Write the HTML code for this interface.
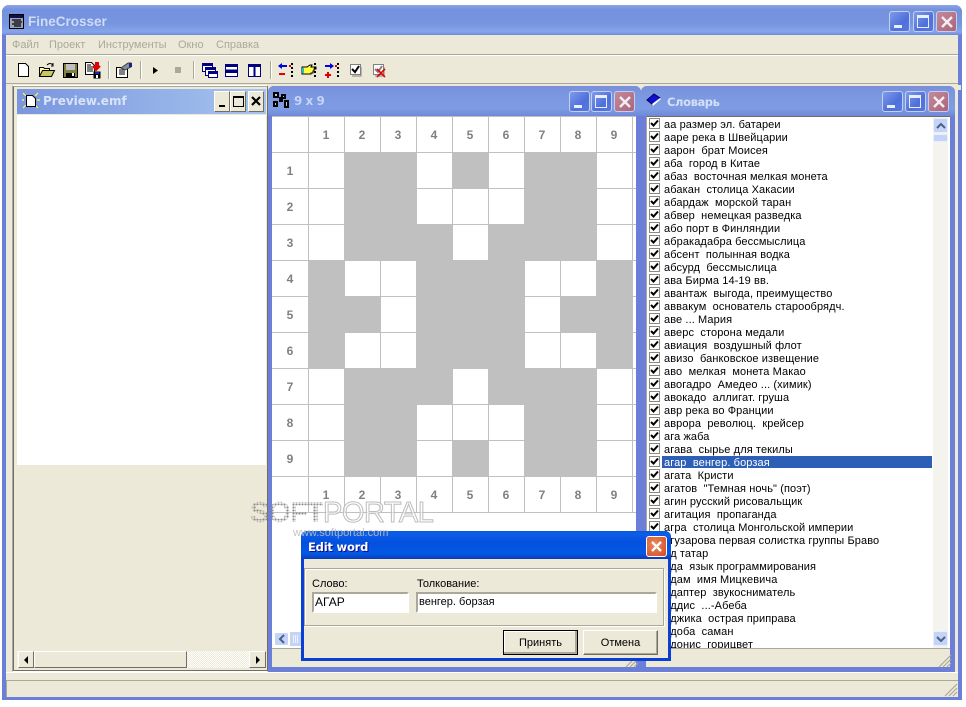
<!DOCTYPE html>
<html><head><meta charset="utf-8"><style>
html,body{margin:0;padding:0;background:#fff;width:966px;height:707px;overflow:hidden}
body{position:relative;font-family:"Liberation Sans",sans-serif;font-size:11px;color:#000}
.a{position:absolute}
.t{position:absolute;white-space:pre;line-height:13px}
.cap{position:absolute;background:linear-gradient(180deg,#7a8fdc 0,#7b97e0 30%,#7e9ce3 75%,#6f88d8 100%)}
.tt{position:absolute;white-space:pre;font-weight:bold;color:#d8e3f8;font-size:13px}
.b{position:absolute;width:19px;height:19px;border:1px solid #c3cff0;border-radius:3px;background:linear-gradient(135deg,#7f9be8,#4f70dc 60%,#5878e0);box-sizing:content-box}
.b.x{background:linear-gradient(135deg,#c28a9c,#ad6479)}
.b i{position:absolute;display:block}
.n i{left:4px;top:13px;width:8px;height:3px;background:#e8eefc}
.m i{left:3px;top:3px;width:10px;height:9px;border:1.5px solid #e8eefc;border-top-width:3px}
.x svg{position:absolute;left:3px;top:3px}
.l{left:664px;letter-spacing:.1px}
.cb{position:absolute;width:75px;height:25px;background:#ece9d8;box-sizing:border-box;border:1px solid;border-color:#fff #716f64 #716f64 #fff;box-shadow:inset -1px -1px 0 #aca899;text-align:center;line-height:24px;font-size:12px}
.in{position:absolute;background:#fff;box-sizing:border-box;border:2px solid;border-color:#aca899 #fff #fff #aca899;height:21px;font-size:12px;line-height:17px;padding-left:1px;white-space:pre}
.cl{position:absolute;background:#ece9d8;border:1px solid;border-color:#fff #716f64 #716f64 #fff;box-sizing:border-box}
</style></head><body>

<!-- main window -->
<div class="a" style="left:2px;top:5px;width:960px;height:695px;background:#6b7fd8;border-radius:7px 7px 0 0"></div>
<div class="cap" style="left:2px;top:5px;width:960px;height:30px;border-radius:7px 7px 0 0;background:linear-gradient(180deg,#8fa6e8 0,#7491dd 15%,#7694e0 60%,#86a5ea 90%,#6f88d8 100%)"></div>
<svg class="a" style="left:9px;top:14px" width="16" height="16" viewBox="0 0 16 16"><rect x=".5" y=".5" width="14" height="14" fill="#9aa3b8" stroke="#000"/><rect x="1" y="1" width="13" height="3" fill="#101050"/><path d="M3 6h9M5 8h8M3 10h9M5 12h7" stroke="#000" stroke-width="1.2"/></svg>
<div class="tt" style="left:28px;top:14px;font-size:13.500px;color:#d0dcf6">FineCrosser</div>
<div class="b n" style="left:889px;top:11px"><i></i></div>
<div class="b m" style="left:913px;top:11px"><i></i></div>
<div class="b x" style="left:936px;top:11px"><svg width="14" height="14" viewBox="0 0 14 14"><path d="M2 2l10 10M12 2L2 12" stroke="#f4eef0" stroke-width="2.4"/></svg></div>

<!-- client -->
<div class="a" style="left:6px;top:35px;width:952px;height:662px;background:#ece9d8"></div>
<div class="a" style="left:6px;top:54px;width:952px;height:1px;background:#aca899"></div>
<div class="a" style="left:6px;top:55px;width:952px;height:1px;background:#fff"></div>
<div class="a" style="left:6px;top:83px;width:952px;height:1px;background:#aca899"></div>

<!-- menu -->
<div class="t" style="left:12px;top:39px;color:#aca899">Файл</div>
<div class="t" style="left:49px;top:39px;color:#aca899">Проект</div>
<div class="t" style="left:98px;top:39px;color:#aca899">Инструменты</div>
<div class="t" style="left:178px;top:39px;color:#aca899">Окно</div>
<div class="t" style="left:216px;top:39px;color:#aca899">Справка</div>

<!-- toolbar -->
<svg class="a" style="left:0;top:56px" width="400" height="28" viewBox="0 56 400 28">
<path d="M18.5 63.5h7l3 3v10h-10z" fill="#fff" stroke="#000"/>
<path d="M39.5 76.5v-9h4l1 1h5v2" fill="#ffffa0" stroke="#000"/><path d="M39.5 76.5l3-6h12l-3 6z" fill="#c8c860" stroke="#000"/><path d="M47 65q3-3 6 0m0-2v3h-2" fill="none" stroke="#000"/>
<rect x="63.5" y="63.5" width="14" height="14" fill="#808040" stroke="#000"/><rect x="66" y="64" width="9" height="6" fill="#c0c0c0"/><rect x="66" y="73" width="9" height="4" fill="#000"/><rect x="72" y="73" width="2" height="3" fill="#fff"/>
<path d="M85.5 62.5h6l3 3v9h-9z" fill="#fff" stroke="#000"/><path d="M87 65h4M87 67h6M87 69h6M87 71h6" stroke="#000"/>
<path d="M96 62v5M93 66l3 4 4-4M98 62v5" stroke="#e00000" stroke-width="2" fill="#e00000"/>
<rect x="93.5" y="71.5" width="7" height="7" fill="#000"/><rect x="95" y="72" width="4" height="2" fill="#2020d0"/><rect x="96" y="75" width="2" height="3" fill="#fff"/>
<path d="M116.5 67.5h11v10h-11z" fill="#fff" stroke="#000"/><path d="M119 70h6M119 72h6M119 74h6" stroke="#000"/><path d="M121 68l7-5 3 0 0 4-6 3z" fill="#8090a0" stroke="#404040"/><rect x="129" y="63" width="3" height="4" fill="#202080"/>
<path d="M153 67l5 3.500-5 3.500z" fill="#000"/>
<rect x="175" y="67" width="6" height="6" fill="#aca899"/>
<g fill="#fff" stroke="#000080"><rect x="202.500" y="63.500" width="10" height="8"/><rect x="205.500" y="67.500" width="10" height="8"/><rect x="208.500" y="71.500" width="9" height="6"/></g>
<path d="M203 65h9M206 69h9M209 73h8" stroke="#000080" stroke-width="2"/>
<rect x="225.500" y="64.500" width="12" height="12" fill="#fff" stroke="#000080"/><path d="M225 66h13M225 70.500h13M225 72h13" stroke="#000080" stroke-width="2"/>
<rect x="248.500" y="64.500" width="12" height="12" fill="#fff" stroke="#000080"/><path d="M248 66h13M254.500 65v12" stroke="#000080" stroke-width="2"/>
<path d="M279 66h8" stroke="#0000e0" stroke-width="2"/><path d="M282 63v6l-4-3z" fill="#0000e0"/><path d="M279 74h6" stroke="#e00000" stroke-width="2"/><path d="M292 63v16" stroke="#000" stroke-width="2" stroke-dasharray="2 2"/><rect x="289" y="65" width="2" height="2" fill="#e00000"/>
<path d="M302 67h5l3-2h2l-1 2h5v2h-2v2h-1v2h-2v1h-9z" fill="#ffff40" stroke="#000"/><rect x="302" y="68" width="2" height="5" fill="#20c0c0"/><path d="M315 63v16" stroke="#000" stroke-width="2" stroke-dasharray="2 2"/>
<path d="M325 66h7" stroke="#0000e0" stroke-width="2"/><path d="M330 63v6l4-3z" fill="#0000e0"/><path d="M325 75h6M328 72v6" stroke="#e00000" stroke-width="2"/><path d="M338 63v16" stroke="#000" stroke-width="2" stroke-dasharray="2 2"/><rect x="335" y="65" width="2" height="2" fill="#e00000"/>
<rect x="350.500" y="64.500" width="10" height="10" fill="#fff" stroke="#808080"/><path d="M361 67v9h-9" fill="none" stroke="#808080"/><path d="M352 69l3 3 4-6" fill="none" stroke="#000" stroke-width="2"/>
<rect x="373.500" y="64.500" width="10" height="10" fill="#fff" stroke="#808080"/><path d="M384 67v9h-9" fill="none" stroke="#808080"/><path d="M375 69l3 3 4-6" fill="none" stroke="#808080" stroke-width="2"/><path d="M377 69l8 8M385 69l-8 8" stroke="#e00000" stroke-width="1.600"/>
<g fill="#aca899"><rect x="108" y="61" width="1" height="18"/><rect x="140" y="61" width="1" height="18"/><rect x="193" y="61" width="1" height="18"/><rect x="270" y="61" width="1" height="18"/></g>
<g fill="#fff"><rect x="109" y="61" width="1" height="18"/><rect x="141" y="61" width="1" height="18"/><rect x="194" y="61" width="1" height="18"/><rect x="271" y="61" width="1" height="18"/></g>
</svg>

<!-- Preview child -->
<div class="a" style="left:12px;top:85px;width:256px;height:587px;box-sizing:border-box;border:1px solid;border-color:#fff #aca899 #fff #aca899"></div>
<div class="a" style="left:13px;top:86px;width:255px;height:585px;box-sizing:border-box;border:1px solid;border-color:#aca899 #716f64 #716f64 #716f64"></div>
<div class="a" style="left:17px;top:89px;width:249px;height:25px;background:linear-gradient(90deg,#7a96df,#a6c4ee)"></div>
<svg class="a" style="left:22px;top:92px" width="18" height="18" viewBox="0 0 18 18"><path d="M1 1l3 3M16 1l-3 3M1 16l3-3M16 16l-3-3M0 8h2M15 8h3" stroke="#ffff40" stroke-width="1.200"/><path d="M4.500 3.500h6l3 3v8h-9z" fill="#fff" stroke="#000"/></svg>
<div class="tt" style="left:43px;top:94px;font-family:'DejaVu Sans',sans-serif;font-size:12px;color:#d8e3f8">Preview.emf</div>
<div class="cl" style="left:214px;top:91px;width:16px;height:21px"><div class="a" style="left:4px;top:13px;width:6px;height:2px;background:#000"></div></div>
<div class="cl" style="left:230px;top:91px;width:16px;height:21px"><div class="a" style="left:2px;top:4px;width:9px;height:8px;border:1px solid #000;border-top-width:2px"></div></div>
<div class="cl" style="left:248px;top:91px;width:16px;height:21px"><svg class="a" style="left:2px;top:4px" width="10" height="10"><path d="M1 1l8 8M9 1l-8 8" stroke="#000" stroke-width="2.200"/></svg></div>
<div class="a" style="left:17px;top:115px;width:249px;height:350px;background:#fff"></div>
<!-- Preview hscroll -->
<div class="a" style="left:17px;top:651px;width:249px;height:17px;background:repeating-conic-gradient(#ece9d8 0 25%,#fff 0 50%) 0 0/2px 2px"></div>
<div class="cl" style="left:18px;top:651px;width:16px;height:17px"><svg class="a" style="left:3px;top:3px" width="8" height="10"><path d="M6 1v8L2 5z" fill="#000"/></svg></div>
<div class="cl" style="left:34px;top:651px;width:153px;height:17px"></div>
<div class="cl" style="left:249px;top:651px;width:17px;height:17px"><svg class="a" style="left:5px;top:3px" width="8" height="10"><path d="M1 1v8l4-4z" fill="#000"/></svg></div>

<!-- 9x9 child -->
<div class="a" style="left:268px;top:86px;width:373px;height:586px;background:#6b7fd8;border-radius:6px 6px 0 0"></div>
<div class="cap" style="left:268px;top:86px;width:373px;height:30px;border-radius:6px 6px 0 0"></div>
<svg class="a" style="left:273px;top:92px" width="17" height="17" viewBox="0 0 17 17"><g fill="#000"><rect x="0" y="0" width="6" height="6"/><rect x="8" y="2" width="5" height="5"/><rect x="0" y="9" width="5" height="6"/><rect x="11" y="8" width="5" height="8"/><rect x="6" y="5" width="4" height="5"/></g><g fill="#c0c0d0"><rect x="2" y="2" width="2" height="2"/><rect x="10" y="4" width="1" height="1"/><rect x="2" y="11" width="1" height="2"/><rect x="13" y="10" width="1" height="4"/></g></svg>
<div class="tt" style="left:294px;top:94px;font-family:'DejaVu Sans',sans-serif;font-size:12px;color:#c6d4f4;letter-spacing:-.5px">9 x 9</div>
<div class="b n" style="left:569px;top:91px"><i></i></div>
<div class="b m" style="left:591px;top:91px"><i></i></div>
<div class="b x" style="left:614px;top:91px"><svg width="14" height="14" viewBox="0 0 14 14"><path d="M2 2l10 10M12 2L2 12" stroke="#f4eef0" stroke-width="2.400"/></svg></div>
<div class="a" style="left:272px;top:116px;width:364px;height:532px;background:#fff"></div>
<div class="a" style="left:272px;top:648px;width:364px;height:19px;background:#ece9d8;border-top:1px solid #aca899;box-sizing:border-box"></div>

<svg class="a" style="left:0;top:0" width="966" height="707" viewBox="0 0 966 707">
<g fill="#c0c0c0">
<rect x="345" y="153" width="72" height="72"/><rect x="453" y="153" width="36" height="36"/><rect x="525" y="153" width="72" height="72"/>
<rect x="345" y="225" width="108" height="36"/><rect x="489" y="225" width="108" height="36"/>
<rect x="309" y="261" width="36" height="108"/><rect x="417" y="261" width="108" height="108"/><rect x="597" y="261" width="36" height="108"/>
<rect x="345" y="297" width="36" height="36"/><rect x="561" y="297" width="36" height="36"/>
<rect x="345" y="369" width="108" height="36"/><rect x="489" y="369" width="108" height="36"/>
<rect x="345" y="405" width="72" height="72"/><rect x="525" y="405" width="72" height="72"/><rect x="453" y="441" width="36" height="36"/>
</g>
<g stroke="#c0c0c0" stroke-width="1" fill="none" shape-rendering="crispEdges">
<path d="M308.500 116v397M344.500 116v397M380.500 116v397M416.500 116v397M452.500 116v397M488.500 116v397M524.500 116v397M560.500 116v397M596.500 116v397M632.500 116v397"/>
<path d="M272 116.500h364M272 152.500h364M272 188.500h364M272 224.500h364M272 260.500h364M272 296.500h364M272 332.500h364M272 368.500h364M272 404.500h364M272 440.500h364M272 476.500h364M272 512.500h364"/>
</g>
<g font-family="Liberation Sans" font-weight="bold" font-size="12" fill="#808080" text-anchor="middle">
<text x="326" y="139">1</text><text x="362" y="139">2</text><text x="398" y="139">3</text><text x="434" y="139">4</text><text x="470" y="139">5</text><text x="506" y="139">6</text><text x="542" y="139">7</text><text x="578" y="139">8</text><text x="614" y="139">9</text>
<text x="326" y="499">1</text><text x="362" y="499">2</text><text x="398" y="499">3</text><text x="434" y="499">4</text><text x="470" y="499">5</text><text x="506" y="499">6</text><text x="542" y="499">7</text><text x="578" y="499">8</text><text x="614" y="499">9</text>
<text x="290" y="175">1</text><text x="290" y="211">2</text><text x="290" y="247">3</text><text x="290" y="283">4</text><text x="290" y="319">5</text><text x="290" y="355">6</text><text x="290" y="391">7</text><text x="290" y="427">8</text><text x="290" y="463">9</text>
</g>
</svg>

<!-- 9x9 hscroll -->
<div class="a" style="left:274px;top:632px;width:15px;height:14px;background:#c4d4f8;border:1px solid #fff;border-radius:2px;box-sizing:border-box"><svg class="a" style="left:3px;top:1px" width="8" height="10"><path d="M6 1L2 5l4 4" fill="none" stroke="#4d6185" stroke-width="2"/></svg></div>
<div class="a" style="left:290px;top:632px;width:14px;height:14px;background:#c4d4f8"><svg class="a" style="left:2px;top:3px" width="8" height="8"><path d="M1.500 0v8M3.500 0v8M5.500 0v8" stroke="#eef3ff"/></svg></div>

<!-- Dict child -->
<div class="a" style="left:641px;top:85px;width:320px;height:5px;background:#ece9d8"></div>
<div class="a" style="left:641px;top:86px;width:314px;height:586px;background:#6b7fd8;border-radius:6px 6px 0 0"></div>
<div class="cap" style="left:641px;top:86px;width:314px;height:30px;border-radius:6px 6px 0 0"></div>
<svg class="a" style="left:646px;top:93px" width="18" height="16" viewBox="0 0 18 16"><path d="M1 7l7-6 6 4-7 7z" fill="#1010d0" stroke="#000060"/><path d="M6 11l8-6 1 1-8 7z" fill="#fff"/></svg>
<div class="tt" style="left:667px;top:95px;font-family:'DejaVu Sans',sans-serif;font-size:11.500px;color:#d5e0f7;letter-spacing:-.4px">Словарь</div>
<div class="b n" style="left:882px;top:91px"><i></i></div>
<div class="b m" style="left:905px;top:91px"><i></i></div>
<div class="b x" style="left:928px;top:91px"><svg width="14" height="14" viewBox="0 0 14 14"><path d="M2 2l10 10M12 2L2 12" stroke="#f4eef0" stroke-width="2.400"/></svg></div>
<div class="a" style="left:646px;top:116px;width:304px;height:551px;background:#ece9d8"></div>
<div class="a" style="left:646px;top:116px;width:304px;height:532px;background:#fff;box-sizing:border-box;border-top:1px solid #716f64;border-left:1px solid #aca899;overflow:hidden"></div>
<div class="a" style="left:646px;top:648px;width:304px;height:1px;background:#aca899"></div>
<div class="a" style="left:933px;top:117px;width:15px;height:531px;background:#f4f3ee"></div>
<div class="a" style="left:933px;top:118px;width:15px;height:15px;background:#c4d4f8;border:1px solid #e8eefc;border-radius:2px;box-sizing:border-box"><svg class="a" style="left:2px;top:3px" width="10" height="8"><path d="M1 6l4-4 4 4" fill="none" stroke="#4d6185" stroke-width="2"/></svg></div>
<div class="a" style="left:933px;top:134px;width:15px;height:8px;background:#c4d4f8;border:1px solid #e8eefc;border-radius:2px;box-sizing:border-box"></div>
<div class="a" style="left:933px;top:631px;width:15px;height:15px;background:#c4d4f8;border:1px solid #e8eefc;border-radius:2px;box-sizing:border-box"><svg class="a" style="left:2px;top:3px" width="10" height="8"><path d="M1 2l4 4 4-4" fill="none" stroke="#4d6185" stroke-width="2"/></svg></div>
<svg class="a" style="left:938px;top:654px" width="14" height="14"><path d="M13 1L1 13M13 5L5 13M13 9L9 13" stroke="#aca899" stroke-width="1.200"/></svg>

<!-- List -->
<div class="a" style="left:662px;top:456px;width:270px;height:12px;background:#2e5fb6"></div>
<div class="t l" style="top:119px">аа размер эл. батареи</div>
<div class="t l" style="top:132px">ааре река в Швейцарии</div>
<div class="t l" style="top:145px">аарон  брат Моисея</div>
<div class="t l" style="top:158px">аба  город в Китае</div>
<div class="t l" style="top:171px">абаз  восточная мелкая монета</div>
<div class="t l" style="top:184px">абакан  столица Хакасии</div>
<div class="t l" style="top:197px">абардаж  морской таран</div>
<div class="t l" style="top:210px">абвер  немецкая разведка</div>
<div class="t l" style="top:223px">або порт в Финляндии</div>
<div class="t l" style="top:236px">абракадабра бессмыслица</div>
<div class="t l" style="top:249px">абсент  полынная водка</div>
<div class="t l" style="top:262px">абсурд  бессмыслица</div>
<div class="t l" style="top:275px">ава Бирма 14-19 вв.</div>
<div class="t l" style="top:288px">авантаж  выгода, преимущество</div>
<div class="t l" style="top:301px">аввакум  основатель старообрядч.</div>
<div class="t l" style="top:314px">аве ... Мария</div>
<div class="t l" style="top:327px">аверс  сторона медали</div>
<div class="t l" style="top:340px">авиация  воздушный флот</div>
<div class="t l" style="top:353px">авизо  банковское извещение</div>
<div class="t l" style="top:366px">аво  мелкая  монета Макао</div>
<div class="t l" style="top:379px">авогадро  Амедео ... (химик)</div>
<div class="t l" style="top:392px">авокадо  аллигат. груша</div>
<div class="t l" style="top:405px">авр река во Франции</div>
<div class="t l" style="top:418px">аврора  революц.  крейсер</div>
<div class="t l" style="top:431px">ага жаба</div>
<div class="t l" style="top:444px">агава  сырье для текилы</div>
<div class="t l" style="top:457px;color:#fff">агар  венгер. борзая</div>
<div class="t l" style="top:470px">агата  Кристи</div>
<div class="t l" style="top:483px">агатов  "Темная ночь" (поэт)</div>
<div class="t l" style="top:496px">агин русский рисовальщик</div>
<div class="t l" style="top:509px">агитация  пропаганда</div>
<div class="t l" style="top:522px">агра  столица Монгольской империи</div>
<div class="t l" style="top:535px">агузарова первая солистка группы Браво</div>
<div class="t l" style="top:548px">ад татар</div>
<div class="t l" style="top:561px">ада  язык программирования</div>
<div class="t l" style="top:574px">адам  имя Мицкевича</div>
<div class="t l" style="top:587px">адаптер  звукосниматель</div>
<div class="t l" style="top:600px">аддис  ...-Абеба</div>
<div class="t l" style="top:613px">аджика  острая приправа</div>
<div class="t l" style="top:626px">адоба  саман</div>
<div class="a" style="left:664px;top:639px;width:260px;height:9px;overflow:hidden"><div class="t l" style="left:0;top:0">адонис  горицвет</div></div>

<svg class="a" style="left:648px;top:117px" width="14" height="540" viewBox="0 0 14 540">
<defs><g id="q"><rect x="1.500" y="1.500" width="10" height="10" fill="#fff" stroke="#8a8a80"/><path d="M3 6l2.500 2.500L10 3.500" fill="none" stroke="#000" stroke-width="2"/></g></defs>
<use href="#q" y="0"/><use href="#q" y="13"/><use href="#q" y="26"/><use href="#q" y="39"/><use href="#q" y="52"/><use href="#q" y="65"/><use href="#q" y="78"/><use href="#q" y="91"/><use href="#q" y="104"/><use href="#q" y="117"/><use href="#q" y="130"/><use href="#q" y="143"/><use href="#q" y="156"/><use href="#q" y="169"/><use href="#q" y="182"/><use href="#q" y="195"/><use href="#q" y="208"/><use href="#q" y="221"/><use href="#q" y="234"/><use href="#q" y="247"/><use href="#q" y="260"/><use href="#q" y="273"/><use href="#q" y="286"/><use href="#q" y="299"/><use href="#q" y="312"/><use href="#q" y="325"/><use href="#q" y="338"/><use href="#q" y="351"/><use href="#q" y="364"/><use href="#q" y="377"/><use href="#q" y="390"/><use href="#q" y="403"/>
</svg>

<!-- status bar -->
<div class="a" style="left:6px;top:672px;width:952px;height:8px;background:#ece9d8;border-top:1px solid #fff;box-sizing:border-box"></div>
<div class="a" style="left:6px;top:680px;width:952px;height:1px;background:#aca899"></div>
<div class="a" style="left:6px;top:681px;width:1px;height:16px;background:#aca899"></div>
<svg class="a" style="left:944px;top:683px" width="14" height="14"><path d="M13 1L1 13M13 5L5 13M13 9L9 13" stroke="#aca899" stroke-width="1.200"/></svg>
<svg class="a" style="left:625px;top:654px" width="14" height="14"><path d="M13 1L1 13M13 5L5 13M13 9L9 13" stroke="#aca899" stroke-width="1.200"/></svg>

<!-- Dialog -->
<div class="a" style="left:301px;top:531px;width:370px;height:130px;background:#0a3fd4;border-radius:6px 6px 0 0"></div>
<div class="a" style="left:301px;top:531px;width:370px;height:28px;border-radius:6px 6px 0 0;background:linear-gradient(180deg,#0a58d8 0,#0c5ee8 10%,#0350de 40%,#0358e6 80%,#0a3cb8 100%)"></div>
<div class="tt" style="left:308px;top:540px;font-family:'DejaVu Sans',sans-serif;font-size:11.500px;color:#fff;letter-spacing:-.2px;text-shadow:1px 1px 0 #0f1089">Edit word</div>
<div class="a" style="left:646px;top:536px;width:21px;height:21px;box-sizing:border-box;border:1px solid #fff;border-radius:3px;background:radial-gradient(circle at 40% 40%,#ea8a60,#d44a20)"><svg class="a" style="left:3px;top:3px" width="13" height="13" viewBox="0 0 13 13"><path d="M2 2l9 9M11 2l-9 9" stroke="#fff" stroke-width="2.300"/></svg></div>
<div class="a" style="left:304px;top:559px;width:364px;height:99px;background:#ece9d8"></div>
<div class="a" style="left:304px;top:568px;width:360px;height:58px;box-sizing:border-box;border:1px solid #aca899;box-shadow:inset 1px 1px 0 #fff,1px 1px 0 #fff"></div>
<div class="t" style="left:312px;top:578px;font-size:11px">Слово:</div>
<div class="t" style="left:417px;top:578px;font-size:11px">Толкование:</div>
<div class="in" style="left:312px;top:592px;width:97px">АГАР</div>
<div class="in" style="left:416px;top:592px;width:241px;font-size:11px">венгер. борзая</div>
<div class="cb" style="left:503px;top:630px;border:1px solid #000;box-shadow:inset -2px -2px 0 #aca899,inset 1px 1px 0 #fff;font-size:11px">Принять</div>
<div class="cb" style="left:583px;top:630px;font-size:11px">Отмена</div>

<!-- watermark (above everything) -->
<div class="a" style="left:250px;top:497px;font:bold 29px 'Liberation Sans',sans-serif;line-height:32px;color:transparent;background:radial-gradient(circle,#8a8a8a 0 1px,transparent 1.200px) 0 0/3px 3px;-webkit-background-clip:text;background-clip:text;letter-spacing:-1px">SOFT</div>
<div class="a" style="left:323px;top:497px;font:29px 'Liberation Sans',sans-serif;line-height:32px;color:rgba(255,255,255,.55);-webkit-text-stroke:1px #bdbdbd;letter-spacing:-.5px">PORTAL</div>
<div class="t" style="left:293px;top:527px;font-size:11px;color:rgba(190,190,190,.9)">www.softportal.com</div>

</body></html>
